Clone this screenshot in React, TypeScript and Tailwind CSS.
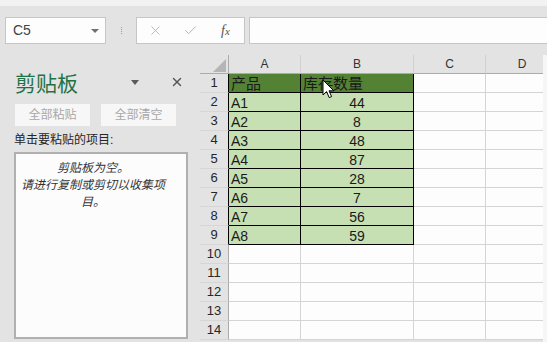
import { X, Check } from 'lucide-react';

const rows: [string, string][] = [
  ['A1', '44'],
  ['A2', '8'],
  ['A3', '48'],
  ['A4', '87'],
  ['A5', '28'],
  ['A6', '7'],
  ['A7', '56'],
  ['A8', '59'],
];

const cols = ['A', 'B', 'C', 'D'];
const widths = ['w-[72px]', 'w-[113px]', 'w-[72px]', 'w-[73px]'];

export default function App() {
  return (
    <div className="relative w-[547px] h-[342px] overflow-hidden bg-[#e3e3e3] font-['Liberation_Sans','Noto_Sans_CJK_SC',sans-serif] text-[#262626]">
      <div className="h-[6px] bg-[#f2f2f2]" />

      {/* formula bar */}
      <div className="h-[49px] flex items-start pt-[11px]">
        <div className="ml-[5px] w-[101px] h-[27px] border border-[#c6c6c6] bg-[#fdfdfd] flex items-center justify-between pl-[7px] pr-[6px]">
          <span className="text-[14px] text-[#444]">C5</span>
          <span className="w-0 h-0 border-l-[4px] border-r-[4px] border-t-[4px] border-l-transparent border-r-transparent border-t-[#707070]" />
        </div>
        <div className="ml-[15px] mt-[10px] flex flex-col gap-[1px]">
          <span className="w-[1px] h-[1px] bg-[#9a9a9a]" />
          <span className="w-[1px] h-[1px] bg-[#9a9a9a]" />
          <span className="w-[1px] h-[1px] bg-[#9a9a9a]" />
          <span className="w-[1px] h-[1px] bg-[#9a9a9a]" />
        </div>
        <div className="ml-[14px] w-[109px] h-[27px] border border-[#c6c6c6] bg-[#fdfdfd] flex items-center">
          <X size={15} strokeWidth={1.4} className="ml-[11px] text-[#b4b4b4]" />
          <Check size={15} strokeWidth={1.6} className="ml-[20px] text-[#b4b4b4]" />
          <span className="ml-[23px] font-['Liberation_Serif',serif] italic text-[14px] text-[#555]">
            f<span className="text-[11px]">x</span>
          </span>
        </div>
        <div className="ml-[4px] flex-1 h-[27px] border-y border-l border-[#c6c6c6] bg-[#fdfdfd]" />
      </div>

      <div className="flex h-[287px]">
        {/* clipboard pane */}
        <div className="w-[200px] flex flex-col">
          <div className="mt-[12px] h-[30px] flex items-center pl-[15px]">
            <span className="text-[21px] leading-[30px] text-[#1f7246] font-['Noto_Sans_CJK_SC',sans-serif]">剪贴板</span>
            <span className="ml-[53px] w-0 h-0 border-l-[4px] border-r-[4px] border-t-[5px] border-l-transparent border-r-transparent border-t-[#5a5a5a]" />
            <X size={14} strokeWidth={2.4} className="ml-[31px] text-[#555]" />
          </div>
          <div className="mt-[7px] flex gap-[11px] pl-[15px]">
            <div className="w-[75px] h-[22px] bg-[#f7f7f7] flex items-center justify-center text-[12px] text-[#a8a8a8]">全部粘贴</div>
            <div className="w-[75px] h-[22px] bg-[#f7f7f7] flex items-center justify-center text-[12px] text-[#a8a8a8]">全部清空</div>
          </div>
          <div className="mt-[6px] h-[16px] pl-[14px] text-[12px] leading-[16px] text-[#262626]">单击要粘贴的项目:</div>
          <div className="mt-[4px] ml-[14px] w-[174px] h-[187px] border-2 border-[#b0b0b0] bg-[#fcfcfc] pt-[6px] pr-[16px] text-center italic text-[12px] leading-[17px] text-[#333]">
            剪贴板为空。
            <br />
            请进行复制或剪切以收集项目。
          </div>
        </div>

        {/* sheet */}
        <div className="w-[343px] overflow-hidden">
          <div className="w-[359px]">
            <div className="flex h-[19px]">
              <div className="w-[29px] h-full border-r border-b border-[#ababab] relative">
                <svg className="absolute right-[2px] bottom-[1px]" width="13" height="13" viewBox="0 0 13 13">
                  <path d="M13 0 L13 13 L0 13 Z" fill="#b5b5b5" />
                </svg>
              </div>
              {cols.map((c, i) => (
                <div
                  key={c}
                  className={`${widths[i]} h-full border-r border-b border-r-[#d0d0d0] border-b-[#ababab] flex items-center justify-center text-[12px] text-[#333]`}
                >
                  {c}
                </div>
              ))}
            </div>
            {Array.from({ length: 14 }, (_, r) => {
              const n = r + 1;
              const inTable = n <= 9;
              const head = n === 1;
              const data = n >= 2 && n <= 9 ? rows[n - 2] : null;
              const cellBg = head ? 'bg-[#548235]' : 'bg-[#c6e0b4]';
              return (
                <div key={n} className="flex h-[19px] bg-[#fdfdfd]">
                  <div
                    className={`w-[29px] h-full border-r border-b border-b-[#d6d6d6] bg-[#e3e3e3] flex items-center justify-center text-[13px] text-[#262626] ${inTable ? 'border-r-black' : 'border-r-[#ababab]'}`}
                  >
                    {n}
                  </div>
                  {inTable ? (
                    <>
                      <div className={`w-[72px] h-full border-r border-b border-black ${cellBg} flex items-end pl-[2px] pb-[1px] leading-none ${head ? 'text-[15px]' : 'text-[14px]'} text-[#1a1a1a]`}>
                        {head ? '产品' : data![0]}
                      </div>
                      <div className={`w-[113px] h-full border-r border-b border-black ${cellBg} flex items-end pb-[1px] leading-none ${head ? 'pl-[2px] text-[15px]' : 'justify-center text-[14px]'} text-[#1a1a1a]`}>
                        {head ? '库存数量' : data![1]}
                      </div>
                    </>
                  ) : (
                    <>
                      <div className="w-[72px] h-full border-r border-b border-[#d4d4d4]" />
                      <div className="w-[113px] h-full border-r border-b border-[#d4d4d4]" />
                    </>
                  )}
                  <div className="w-[72px] h-full border-r border-b border-[#d4d4d4]" />
                  <div className="w-[73px] h-full border-r border-b border-[#d4d4d4]" />
                </div>
              );
            })}
          </div>
        </div>
        <div className="w-[4px] bg-[#f6f6f6]" />
      </div>

      {/* mouse pointer */}
      <svg className="absolute left-[322px] top-[79px]" width="14" height="20" viewBox="0 0 14 20">
        <path d="M1 1 L1 16 L4.6 12.6 L7.2 18.6 L9.6 17.6 L7 11.8 L11.8 11.8 Z" fill="#ffffff" stroke="#000000" strokeWidth="1" strokeLinejoin="miter" />
      </svg>
    </div>
  );
}
